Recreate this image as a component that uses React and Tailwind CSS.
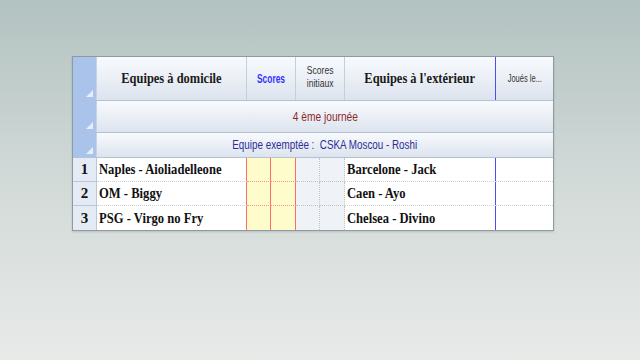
import React from "react";

const serif = { fontFamily: '"Liberation Serif", "Times New Roman", serif' };
const sans = { fontFamily: '"Liberation Sans", Arial, sans-serif' };

function Corner() {
  return (
    <div className="relative w-[24px] h-full shrink-0 bg-[#a9c3ea] border-r border-[#c5d3e6]">
      <div className="absolute right-[3px] bottom-[3px] w-0 h-0 border-l-[7px] border-l-transparent border-b-[7px] border-b-[#e8eef8]" />
    </div>
  );
}

const rows = [
  ["1", "Naples - Aioliadelleone", "Barcelone - Jack"],
  ["2", "OM - Biggy", "Caen - Ayo"],
  ["3", "PSG - Virgo no Fry", "Chelsea - Divino"],
];

const hdr = "bg-gradient-to-b from-[#f8fafd] to-[#dde4ee]";

export default function App() {
  return (
    <div className="w-[640px] h-[360px] overflow-hidden bg-gradient-to-b from-[#b2c2c0] via-[#d2dad8] to-[#e8eae8] pt-[56px] pl-[72px]">
      <div className="w-[482px] border border-[#8e9aa2] bg-white shadow-[0_1px_2px_rgba(0,0,0,0.15)]">
        {/* Header */}
        <div className="flex h-[44px] border-b border-[#b3c3d6]">
          <Corner />
          <div className={`w-[150px] shrink-0 flex items-center justify-center ${hdr} border-r border-[#c3cfdd] text-[15px] font-bold text-[#1a1a1a] whitespace-nowrap`} style={serif}>
            <span className="inline-block scale-x-[0.83]">Equipes à domicile</span>
          </div>
          <div className={`w-[49px] shrink-0 flex items-center justify-center ${hdr} border-r border-[#c3cfdd] text-[12px] font-bold text-[#3333ff]`} style={sans}>
            <span className="inline-block scale-x-[0.7]">Scores</span>
          </div>
          <div className={`w-[49px] shrink-0 flex items-start justify-center pt-[7px] text-center leading-[13px] ${hdr} border-r border-[#c3cfdd] text-[11px] text-[#333]`} style={sans}>
            <span className="inline-block scale-x-[0.78]">Scores<br />initiaux</span>
          </div>
          <div className={`w-[151px] shrink-0 flex items-center justify-center ${hdr} border-r border-[#4d4df5] text-[15px] font-bold text-[#1a1a1a] whitespace-nowrap`} style={serif}>
            <span className="inline-block scale-x-[0.83]">Equipes à l'extérieur</span>
          </div>
          <div className={`flex-1 flex items-center justify-center ${hdr} text-[10px] text-[#333] whitespace-nowrap`} style={sans}>
            <span className="inline-block scale-x-[0.75]">Joués le...</span>
          </div>
        </div>
        {/* Journée */}
        <div className="flex h-[32px] border-b border-[#b3c3d6]">
          <Corner />
          <div className={`flex-1 flex items-center justify-center ${hdr} text-[12px] text-[#8e2a2a] whitespace-nowrap`} style={sans}>
            <span className="inline-block scale-x-[0.85]">4 ème journée</span>
          </div>
        </div>
        {/* Exemptée */}
        <div className="flex h-[25px] border-b border-[#b3c3d6]">
          <Corner />
          <div className={`flex-1 flex items-center justify-center ${hdr} text-[12px] text-[#2d2d99] whitespace-nowrap`} style={sans}>
            <span className="inline-block scale-x-[0.82]">Equipe exemptée :&nbsp; CSKA Moscou - Roshi</span>
          </div>
        </div>
        {/* Data rows */}
        {rows.map(([n, home, away], i) => {
          const last = i === 2;
          const gb = last ? "" : "border-b border-dotted border-[#cfcfcf]";
          const rb = last ? "" : "border-b border-dotted border-[#ff8f8f]";
          return (
            <div key={n} className="flex h-[24px]">
              <div className={`w-[24px] shrink-0 flex items-center justify-center bg-[#e4ebf5] border-r border-[#b9c7d8] text-[15px] font-bold text-[#111] ${last ? "" : "border-b"}`} style={serif}>
                {n}
              </div>
              <div className={`w-[150px] shrink-0 flex items-center pl-[2px] text-[15px] font-bold text-[#111] shadow-[inset_-1px_0_0_#ff6b6b] whitespace-nowrap ${gb}`} style={serif}>
                <span className="inline-block origin-left scale-x-[0.84]">{home}</span>
              </div>
              <div className={`w-[24px] shrink-0 bg-[#fffccc] shadow-[inset_-1px_0_0_#ff6b6b] ${rb}`} />
              <div className={`w-[25px] shrink-0 bg-[#fffccc] shadow-[inset_-1px_0_0_#ff6b6b] ${rb}`} />
              <div className={`w-[24px] shrink-0 bg-[#eff2f7] border-r border-dotted border-[#c4c4c4] ${last ? "" : "border-b"}`} />
              <div className={`w-[25px] shrink-0 bg-[#eff2f7] border-r border-dotted border-[#c4c4c4] ${last ? "" : "border-b"}`} />
              <div className={`w-[151px] shrink-0 flex items-center pl-[2px] text-[15px] font-bold text-[#111] shadow-[inset_-1px_0_0_#4d4df5] whitespace-nowrap ${gb}`} style={serif}>
                <span className="inline-block origin-left scale-x-[0.84]">{away}</span>
              </div>
              <div className={`flex-1 ${gb}`} />
            </div>
          );
        })}
      </div>
    </div>
  );
}
